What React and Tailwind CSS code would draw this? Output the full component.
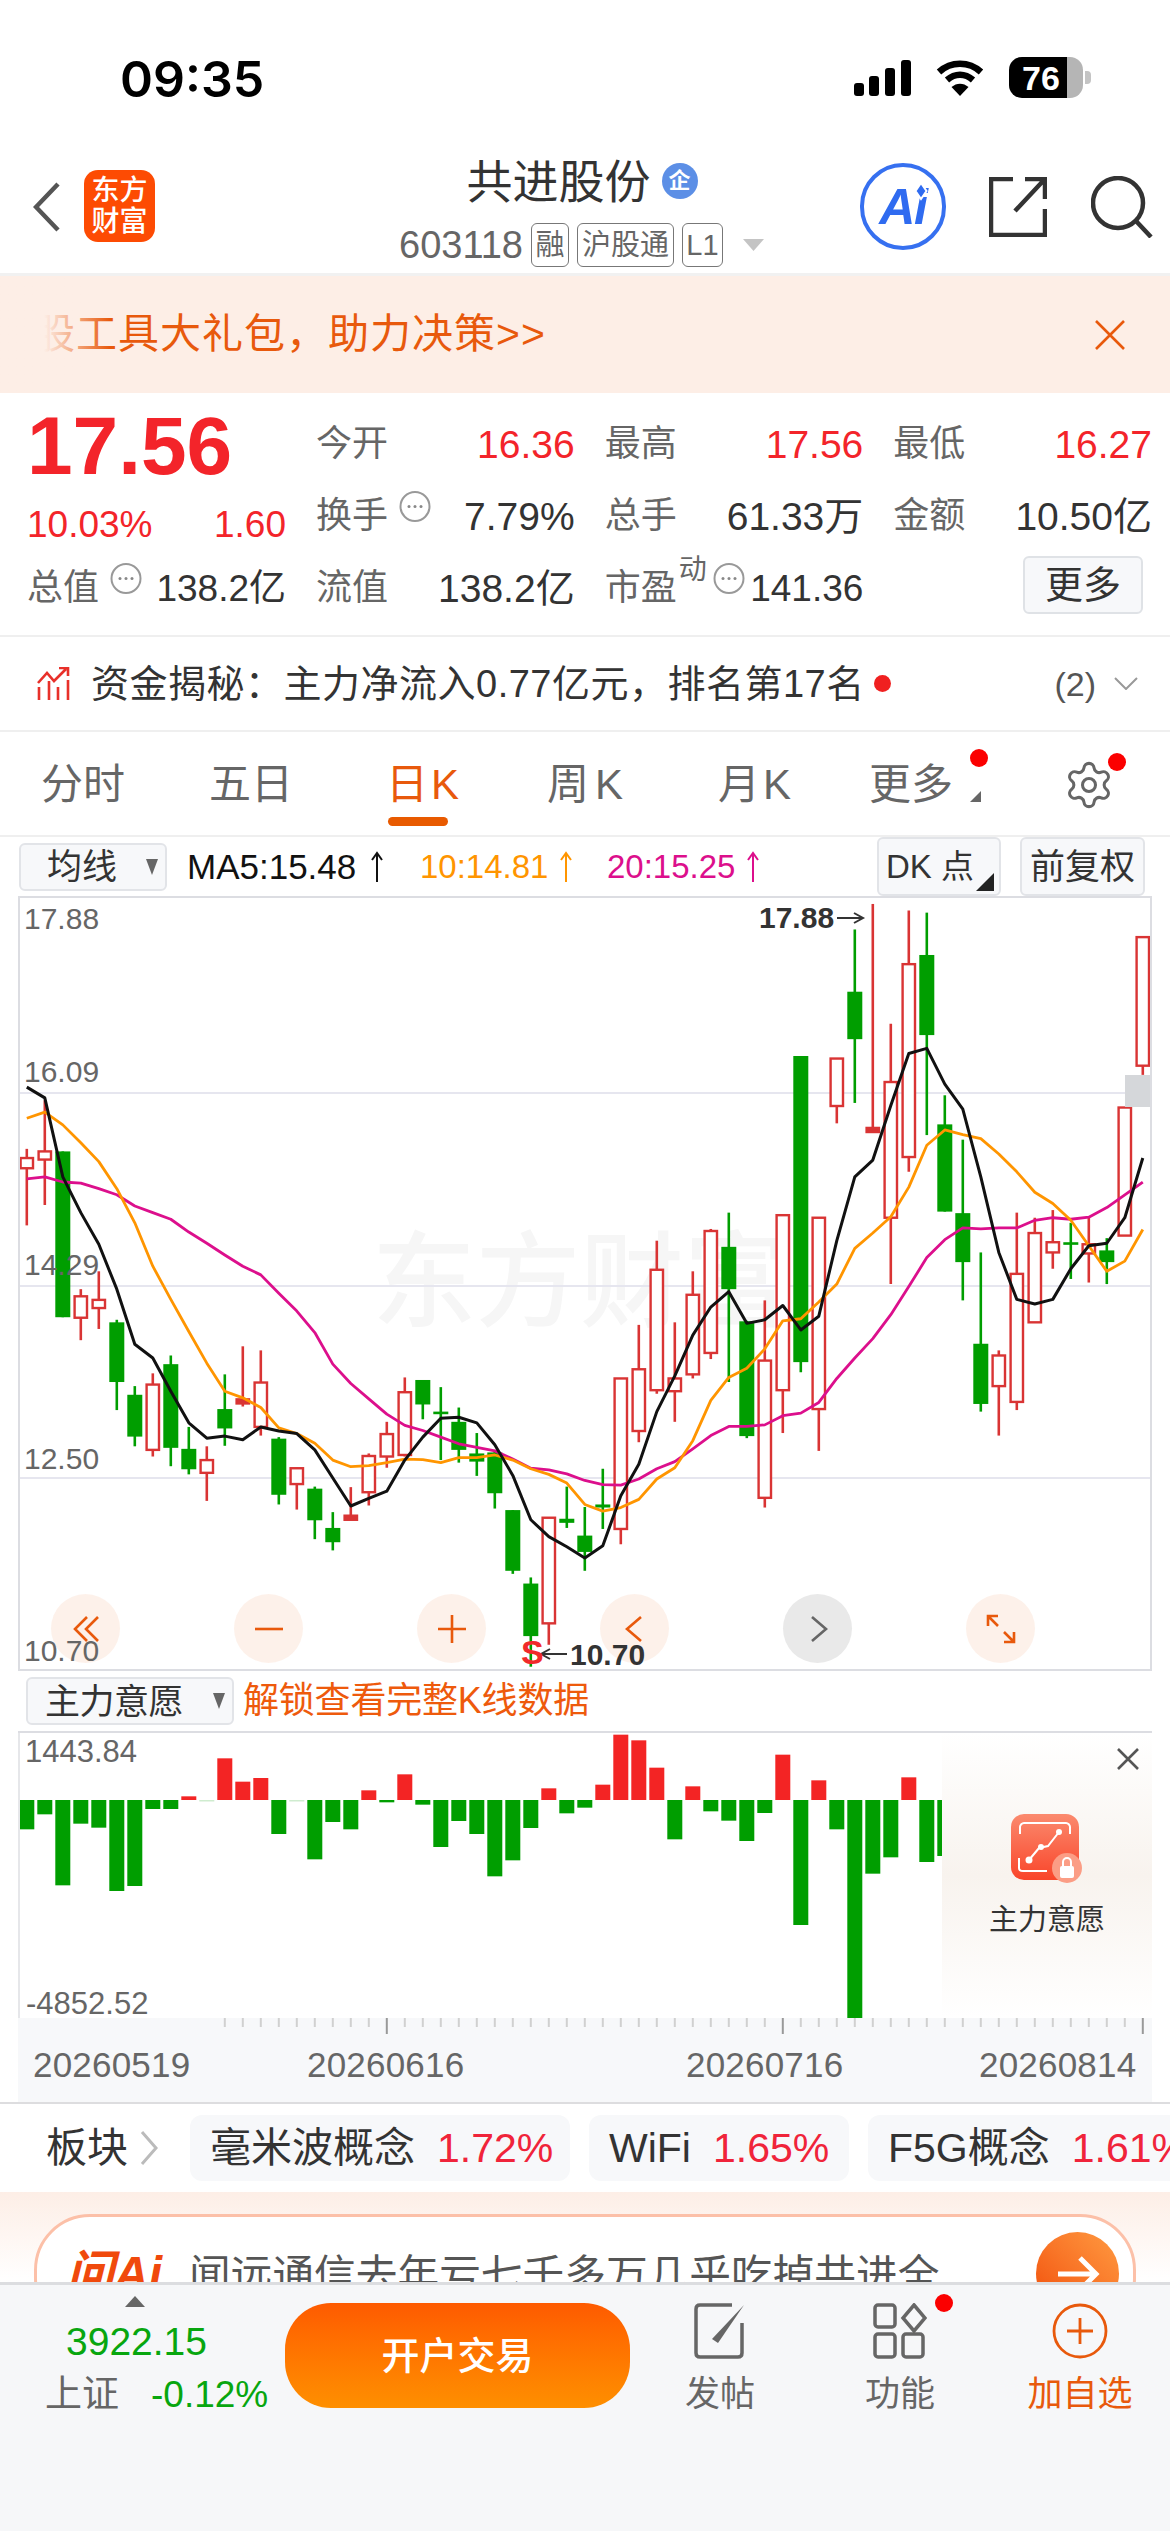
import React from 'react';
import { Settings } from 'lucide-react';

// [type, high, bodyTop, bodyBottom, low] measured off the reference
const CANDLES = [
  ['r',525,543,563,675],['r',430,530,546,635],['g',530,530,855,855],['r',800,814,856,900],['r',765,821,837,878],
  ['g',860,865,982,1037],['g',990,1007,1089,1108],['r',965,987,1115,1128],['g',930,947,1111,1147],['g',1070,1113,1153,1163],
  ['r',1108,1135,1160,1215],['g',967,1035,1073,1107],['r',912,1016,1024,1030],['r',920,983,1070,1087],['g',1090,1093,1203,1222],
  ['r',1150,1151,1182,1232],['g',1187,1191,1253,1290],['g',1237,1268,1296,1312],['r',1188,1244,1252,1252],['r',1122,1127,1198,1224],
  ['r',1060,1084,1128,1150],['r',973,1002,1125,1128],['g',978,978,1026,1055],['g',992,1040,1044,1135],['g',1032,1060,1115,1140],
  ['g',1082,1122,1138,1166],['g',1115,1120,1200,1230],['g',1233,1233,1352,1358],['g',1365,1377,1480,1540],['r',1248,1248,1455,1497],
  ['g',1187,1250,1258,1268],['g',1227,1283,1315,1352],['g',1152,1222,1228,1270],['r',975,975,1270,1300],['r',870,957,1078,1100],
  ['r',705,762,998,1005],['r',865,975,1000,1060],['r',765,811,967,975],['r',682,686,925,937],['g',650,717,800,982],
  ['g',862,863,1088,1092],['r',822,940,1209,1228],['r',655,655,998,1082],['g',343,343,943,963],['r',660,660,1035,1117],
  ['r',348,348,441,475],['g',95,217,310,435],['r',45,484,492,492],['r',280,394,660,790],['r',58,163,541,570],
  ['g',62,145,302,498],['g',420,477,648,648],['g',507,651,747,822],['g',728,907,1025,1040],['r',920,930,990,1087],
  ['r',650,770,1021,1037],['r',660,690,865,865],['r',645,708,728,760],['g',670,708,712,780],['r',660,712,730,787],
  ['g',700,724,747,790],['r',444,444,695,695],['r',110,110,362,380],
];
const MA5 = [404,425,580,650,712,800,908,935,1000,1062,1092,1088,1095,1070,1078,1083,1115,1170,1225,1210,1196,1135,1090,1053,1051,1062,1105,1165,1252,1285,1305,1327,1303,1205,1143,1040,970,890,835,805,867,860,832,880,853,705,580,547,440,338,328,398,447,580,728,820,829,820,760,715,710,660,543];
const MA10 = [465,453,478,513,550,603,670,755,820,883,945,1000,1013,1032,1072,1083,1102,1135,1148,1146,1140,1133,1134,1140,1130,1130,1125,1135,1152,1163,1180,1222,1235,1228,1212,1172,1150,1097,1018,973,955,917,862,858,825,790,720,690,658,600,518,488,497,505,535,570,610,632,665,715,765,745,683];
const MA20 = [584,580,590,592,603,615,637,650,663,688,710,733,755,772,808,843,885,947,985,1015,1045,1067,1077,1090,1103,1110,1117,1133,1151,1154,1162,1175,1183,1184,1172,1152,1138,1113,1087,1069,1069,1066,1048,1043,1022,975,935,897,850,795,738,703,680,682,680,680,665,660,663,659,640,615,590];
// bar end position, zero line at 417
const BARS = [505,460,673,488,500,690,675,444,444,406,420,292,362,351,519,420,595,483,505,388,424,340,431,558,480,519,646,598,501,382,457,440,371,221,238,320,535,376,451,479,540,456,281,792,358,505,1076,638,589,349,603,585];
const FAINT = [10, 15];

const cx = (i) => 26.8 + 18 * i;
const cy = (z) => 880 + z / 1.96;
const by = (z) => 1660 + z / 3;
const linePoints = (arr) => arr.map((v, i) => `${cx(i)},${cy(v)}`).join(' ');

const Candle = ({ d, i }) => {
  const [type, high, top, bottom, low] = d;
  const x = cx(i);
  const color = type === 'r' ? '#d93434' : '#009e00';
  return (
    <g>
      <line x1={x} x2={x} y1={cy(high)} y2={cy(low)} stroke={color} strokeWidth="2.6" />
      {type === 'r' ? (
        <rect x={x - 6.2} y={cy(top)} width="12.4" height={Math.max(cy(bottom) - cy(top), 1)} fill={bottom - top < 10 ? color : '#fff'} stroke={color} strokeWidth="2.4" />
      ) : (
        <rect x={x - 7.5} y={cy(top)} width="15" height={Math.max(cy(bottom) - cy(top), 2.6)} fill={color} />
      )}
    </g>
  );
};

const KChartSvg = () => (
  <svg className="absolute inset-0" width="1134" height="775" viewBox="18 897 1134 775">
    {[1092, 1285, 1477].map((y) => (
      <line key={y} x1="18" x2="1152" y1={y} y2={y} stroke="#e6e6ef" strokeWidth="2" />
    ))}
    {CANDLES.map((d, i) => <Candle key={i} d={d} i={i} />)}
    <polyline points={linePoints(MA20)} fill="none" stroke="#dc0f8c" strokeWidth="2.8" strokeLinejoin="round" />
    <polyline points={linePoints(MA10)} fill="none" stroke="#ff9500" strokeWidth="2.8" strokeLinejoin="round" />
    <polyline points={linePoints(MA5)} fill="none" stroke="#111" strokeWidth="3" strokeLinejoin="round" />
    <rect x="1125" y="1074" width="27" height="32" fill="#d5d7da" />
    <path d="M837 917h26m-9-5 9 5-9 5" fill="none" stroke="#333" strokeWidth="2" />
    <path d="M567 1653h-26m9-5-9 5 9 5" fill="none" stroke="#333" strokeWidth="2" />
  </svg>
);

const RoundBtn = ({ gray, children }) => (
  <div className={`w-[69px] h-[69px] rounded-full flex items-center justify-center ${gray ? 'bg-[#e9e9e9]' : 'bg-[#fdf0e8]/90'}`}>
    <svg width="36" height="36" viewBox="0 0 36 36" fill="none" stroke={gray ? '#666' : '#e8590c'} strokeWidth="2.6">
      {children}
    </svg>
  </div>
);

const Dots = ({ className = '' }) => (
  <svg className={className} width="32" height="33" viewBox="0 0 32 33">
    <circle cx="16" cy="16.5" r="14.5" fill="none" stroke="#999" strokeWidth="2" />
    <circle cx="10" cy="16.5" r="1.5" fill="#888" />
    <circle cx="16" cy="16.5" r="1.5" fill="#888" />
    <circle cx="22" cy="16.5" r="1.5" fill="#888" />
  </svg>
);

const Tag = ({ w, children }) => (
  <span className={`h-[44px] ${w} flex items-center justify-center border-[1.5px] border-[#777] rounded-md text-[#666] text-[29px] leading-none`}>
    {children}
  </span>
);

const UpArrow = ({ color }) => (
  <svg width="16" height="32" viewBox="0 0 16 32" fill="none" stroke={color} strokeWidth="2">
    <path d="M8 31V2M3 9l5-7 5 7" />
  </svg>
);

const Stat = ({ label, value, red, info }) => (
  <div className="flex items-center justify-between h-[72px]">
    <span className="relative text-[36px] text-[#666] leading-none">
      {label}
      {info && <Dots className="absolute left-[83px] -top-[8px]" />}
    </span>
    <span className={`text-[39px] leading-none ${red ? 'text-[#f3242a]' : 'text-[#333]'}`}>{value}</span>
  </div>
);

const Tab = ({ w, active, children }) => (
  <div className={`${w} relative text-[42px] leading-none ${active ? 'text-[#e8590c]' : 'text-[#666]'}`}>
    {children}
    {active && <div className="absolute left-[2px] top-[53px] w-[60px] h-[9px] rounded-full bg-[#e85a00]" />}
  </div>
);

const ToolButton = ({ label, active, children }) => (
  <div className="w-[180px] flex flex-col items-center">
    <div className="h-[56px] flex items-center justify-center">{children}</div>
    <span className={`mt-[17px] text-[35px] leading-none ${active ? 'text-[#e8590c]' : 'text-[#666]'}`}>{label}</span>
  </div>
);

const Chip = ({ name, pct, w }) => (
  <div className={`${w} shrink-0 h-[66px] bg-[#f7f8fa] rounded-xl flex items-center pl-[20px] gap-[22px] text-[41px] leading-none`}>
    <span className="text-[#333] whitespace-nowrap">{name}</span>
    <span className="text-[#f0243a]">{pct}</span>
  </div>
);

export default function App() {
  return (
    <div className="w-[1170px] h-[2532px] overflow-hidden bg-white font-['Liberation_Sans','Noto_Sans_CJK_SC',sans-serif]">
      {/* status bar */}
      <div className="h-[135px] flex items-start justify-between pt-[57px] pl-[120px] pr-[79px]">
        <span className="font-['Inter',sans-serif] font-semibold text-[50px] leading-[44px] text-black">09:35</span>
        <div className="flex items-center gap-[25px]">
          <svg width="57" height="36" viewBox="0 0 57 36" fill="#000">
            <rect x="0" y="23" width="10" height="13" rx="3" />
            <rect x="15" y="16" width="10" height="20" rx="3" />
            <rect x="31" y="8" width="10" height="28" rx="3" />
            <rect x="47" y="0" width="10" height="36" rx="3" />
          </svg>
          <svg width="48" height="36" viewBox="0 0 48 36" fill="none" stroke="#000" strokeWidth="6.5">
            <path d="M3 12C15 1 33 1 45 12" />
            <path d="M11 20c8-7 18-7 26 0" />
            <path d="M24 36 15.5 27c5-4.500 12-4.500 17 0z" fill="#000" stroke="none" />
          </svg>
          <div className="relative w-[82px] h-[41px] flex">
            <div className="w-[58px] h-[41px] bg-black rounded-l-[13px] flex items-center justify-center text-white font-bold text-[34px] leading-none pl-[6px]">76</div>
            <div className="w-[16px] h-[41px] bg-[#b5b5b5] rounded-r-[13px]" />
            <div className="w-[6px] h-[13px] mt-[14px] ml-[2px] rounded-r bg-[#c4c4c4]" />
          </div>
        </div>
      </div>

      {/* nav bar */}
      <div className="h-[138px] flex items-start pl-[33px] relative">
        <svg className="mt-[47px]" width="27" height="50" viewBox="0 0 27 50" fill="none" stroke="#555" strokeWidth="4.500">
          <path d="M25 2 3 25l22 23" />
        </svg>
        <div className="ml-[24px] mt-[35px] w-[71px] h-[72px] rounded-[14px] bg-[#fd4b03] flex flex-col items-center justify-center text-white text-[28px] leading-[31px] font-medium">
          <span>东方</span>
          <span>财富</span>
        </div>
        <div className="ml-[244px] w-[366px] flex flex-col items-center">
          <div className="h-[88px] w-full flex items-start justify-center pt-[22px]">
            <span className="text-[46px] leading-[50px] text-[#333]">共进股份</span>
            <span className="ml-[11px] mt-[6px] w-[36px] h-[36px] rounded-full bg-[#5c8fe6] flex items-center justify-center text-white text-[22px] font-bold leading-none">企</span>
          </div>
          <div className="w-full flex items-center gap-[8px]">
            <span className="text-[38px] leading-none text-[#666]">603118</span>
            <Tag w="w-[38px]">融</Tag>
            <Tag w="w-[97px]">沪股通</Tag>
            <Tag w="w-[41px]">L1</Tag>
            <svg className="ml-[12px]" width="21" height="12" viewBox="0 0 21 12"><path d="M0 0h21L10.500 12z" fill="#c4c4c4" /></svg>
          </div>
        </div>
        <div className="ml-[95px] mt-[28px] relative w-[86px] h-[87px] rounded-full border-[4px] border-[#3670f0] flex items-center justify-center">
          <span className="font-bold italic text-[#2f6bf0] text-[50px] leading-none tracking-tight">Ai</span>
          <svg className="absolute left-[47px] top-[14px]" width="20" height="20" viewBox="0 0 20 20"><path d="M10 2l5.500 8-5.500 8-5.500-8z" fill="#2f6bf0" stroke="#fff" strokeWidth="2" /></svg>
        </div>
        <svg className="ml-[43px] mt-[42px]" width="58" height="60" viewBox="0 0 58 60" fill="none" stroke="#333" strokeWidth="4.500">
          <path d="M24 2H2v56h54V32" />
          <path d="M26 34 55 3M36 2h20v20" />
        </svg>
        <svg className="ml-[44px] mt-[41px]" width="62" height="62" viewBox="0 0 62 62" fill="none" stroke="#333" strokeWidth="4.500">
          <circle cx="27" cy="27" r="25" />
          <path d="M45 45l15 16" />
        </svg>
      </div>

      {/* banner */}
      <div className="border-t-[3px] border-[#f1f1f1] h-[120px] bg-[#fdeee6] relative flex items-center justify-between pl-[34px] pr-[45px]">
        <span className="text-[41px] leading-none tracking-[1px] text-[#e8590c] whitespace-nowrap">股工具大礼包，助力决策&gt;&gt;</span>
        <svg width="30" height="30" viewBox="0 0 30 30" fill="none" stroke="#e8590c" strokeWidth="2.600"><path d="M1 1l28 28M29 1 1 29" /></svg>
        <div className="absolute left-0 top-0 w-[110px] h-full bg-gradient-to-r from-[#fdeee6] from-40% to-[#fdeee6]/0" />
      </div>

      {/* quote */}
      <div className="h-[244px] border-b-2 border-[#efefef] pt-[15px] pl-[27px] pr-[18px] flex">
        <div className="w-[259px] shrink-0">
          <div className="h-[72px] pt-[4px] flex items-center text-[82px] leading-none font-bold text-[#f3242a]">17.56</div>
          <div className="h-[72px] pt-[16px] flex items-center justify-between text-[#f3242a] text-[37px] leading-none">
            <span>10.03%</span>
            <span>1.60</span>
          </div>
          <div className="h-[72px] flex items-center justify-between">
            <span className="relative text-[36px] text-[#666] leading-none">
              总值
              <Dots className="absolute left-[83px] -top-[8px]" />
            </span>
            <span className="text-[37px] leading-none text-[#333]">138.2亿</span>
          </div>
        </div>
        <div className="ml-[30px] flex-1 grid grid-cols-3 gap-x-[30px] content-start">
          <Stat label="今开" value="16.36" red />
          <Stat label="最高" value="17.56" red />
          <Stat label="最低" value="16.27" red />
          <Stat label="换手" value="7.79%" info />
          <Stat label="总手" value="61.33万" />
          <Stat label="金额" value="10.50亿" />
          <Stat label="流值" value="138.2亿" />
          <div className="flex items-center justify-between h-[72px]">
            <span className="relative text-[36px] text-[#666] leading-none">
              市盈
              <span className="absolute left-[74px] -top-[14px] text-[28px] whitespace-nowrap">动</span>
              <Dots className="absolute left-[108px] -top-[8px]" />
            </span>
            <span className="text-[37px] leading-none text-[#333]">141.36</span>
          </div>
          <div className="flex items-start justify-end h-[72px] pr-[9px] pt-[4px]">
            <div className="w-[120px] h-[58px] bg-[#f7f8fa] border-2 border-[#dfe2e6] rounded-md flex items-center justify-center text-[38px] leading-none text-[#333]">更多</div>
          </div>
        </div>
      </div>

      {/* capital flow */}
      <div className="h-[95px] border-b-2 border-[#efefef] flex items-center pl-[36px] pr-[32px]">
        <svg width="35" height="34" viewBox="0 0 35 34" fill="none" stroke="#e8302a" strokeWidth="2.600">
          <path d="M2 16 11 6l7 8L30 2M23 1h9v8" />
          <path d="M3 33V20M13 33V14M22 33V20M32 33V13" />
        </svg>
        <span className="ml-[20px] text-[38px] leading-none text-[#333] whitespace-nowrap tracking-[0.5px]">资金揭秘：主力净流入0.77亿元，排名第17名</span>
        <span className="ml-[9px] w-[17px] h-[17px] rounded-full bg-[#f02020]" />
        <span className="ml-auto text-[34px] text-[#555] leading-none">(2)</span>
        <svg className="ml-[18px]" width="24" height="13" viewBox="0 0 24 13" fill="none" stroke="#999" strokeWidth="2"><path d="M1 1l11 11L23 1" /></svg>
      </div>

      {/* period tabs */}
      <div className="h-[105px] border-b-2 border-[#efefef] flex items-center pl-[41px] pt-[3px] relative">
        <Tab w="w-[168px]">分时</Tab>
        <Tab w="w-[177px]">五日</Tab>
        <Tab w="w-[161px]" active>日<span className="ml-[3px]">K</span></Tab>
        <Tab w="w-[171px]">周<span className="ml-[6px]">K</span></Tab>
        <Tab w="w-[151px]">月<span className="ml-[3px]">K</span></Tab>
        <div className="relative w-[194px] text-[42px] leading-none text-[#666]">
          更多
          <span className="absolute left-[101px] -top-[15px] w-[18px] h-[18px] rounded-full bg-[#fb0000]" />
          <svg className="absolute left-[101px] top-[27px]" width="11" height="11" viewBox="0 0 11 11"><path d="M11 0v11H0z" fill="#666" /></svg>
        </div>
        <div className="relative">
          <Settings size={52} strokeWidth={1.4} color="#666" />
          <span className="absolute left-[45px] -top-[6px] w-[18px] h-[18px] rounded-full bg-[#fb0000]" />
        </div>
      </div>

      {/* indicator row */}
      <div className="h-[59px] flex items-center pl-[19px] pr-[25px]">
        <div className="w-[148px] h-[48px] bg-[#f7f8fa] border-2 border-[#e2e4e8] rounded-md flex items-center text-[35px] leading-none text-[#333] pl-[26px]">
          均线
          <svg className="ml-[29px]" width="12" height="16" viewBox="0 0 12 16"><path d="M0 0h12L6 16z" fill="#666" /></svg>
        </div>
        <div className="ml-[20px] w-[233px] flex items-center text-[35px] leading-none text-[#111]">
          <span>MA5:15.48</span>
          <span className="ml-[13px]"><UpArrow color="#111" /></span>
        </div>
        <div className="w-[187px] flex items-center text-[33px] leading-none text-[#ff9500]">
          <span>10:14.81</span>
          <span className="ml-[10px]"><UpArrow color="#ff9500" /></span>
        </div>
        <div className="flex items-center text-[33px] leading-none text-[#dc0f8c]">
          <span>20:15.25</span>
          <span className="ml-[10px]"><UpArrow color="#dc0f8c" /></span>
        </div>
        <div className="ml-auto relative w-[124px] h-[59px] bg-[#f7f8fa] border-2 border-[#e2e4e8] rounded-md flex items-center pl-[7px] text-[33px] leading-none text-[#333]">
          DK 点
          <svg className="absolute right-[5px] bottom-[3px]" width="18" height="18" viewBox="0 0 18 18"><path d="M18 0v18H0z" fill="#222" /></svg>
        </div>
        <div className="ml-[19px] w-[125px] h-[59px] bg-[#f7f8fa] border-2 border-[#e2e4e8] rounded-md flex items-center justify-center text-[35px] leading-none text-[#333]">前复权</div>
      </div>

      {/* k line chart */}
      <div className="mx-[18px] w-[1134px] h-[775px] relative border-t-2 border-b-2 border-[#dcdde2] overflow-hidden">
        <div className="absolute left-[354px] top-[333px] text-[104px] leading-none text-[#f6f6f6] whitespace-nowrap font-medium">东方财富</div>
        <KChartSvg />
        <div className="absolute inset-0 border-x-2 border-[#dcdde2]" />
        <div className="absolute left-[6px] top-[5px] text-[30px] leading-[32px] text-[#666]">17.88</div>
        <div className="absolute left-[6px] top-[158px] text-[30px] leading-[32px] text-[#666]">16.09</div>
        <div className="absolute left-[6px] top-[351px] text-[30px] leading-[32px] text-[#666]">14.29</div>
        <div className="absolute left-[6px] top-[545px] text-[30px] leading-[32px] text-[#666]">12.50</div>
        <div className="absolute left-[33px] right-[117px] top-[696px] flex justify-between">
          <RoundBtn><path d="M19 6 7 18l12 12M30 6 18 18l12 12" /></RoundBtn>
          <RoundBtn><path d="M4 18h28" /></RoundBtn>
          <RoundBtn><path d="M4 18h28M18 4v28" /></RoundBtn>
          <RoundBtn><path d="M24 6 10 18l14 12" /></RoundBtn>
          <RoundBtn gray><path d="M12 6l14 12-14 12" /></RoundBtn>
          <RoundBtn><path d="M5 15V5h10M5 5l10 10M31 21v10H21M31 31 21 21" /></RoundBtn>
        </div>
        <div className="absolute left-[6px] top-[737px] text-[30px] leading-[32px] text-[#666]">10.70</div>
        <div className="absolute left-[741px] top-[4px] text-[30px] leading-[32px] font-semibold text-[#333]">17.88</div>
        <div className="absolute left-[503px] top-[736px] text-[34px] leading-[36px] font-bold text-[#f02a2a]">S</div>
        <div className="absolute left-[552px] top-[741px] text-[30px] leading-[32px] font-semibold text-[#333]">10.70</div>
      </div>

      {/* sub indicator row */}
      <div className="h-[60px] flex items-center pl-[26px]">
        <div className="w-[208px] h-[48px] bg-[#f7f8fa] border-2 border-[#e2e4e8] rounded-md flex items-center text-[35px] leading-none text-[#333] pl-[17px] tracking-[-0.500px]">
          主力意愿
          <svg className="ml-[30px]" width="12" height="16" viewBox="0 0 12 16"><path d="M0 0h12L6 16z" fill="#666" /></svg>
        </div>
        <span className="ml-[9px] text-[36px] tracking-[-0.200px] leading-none text-[#ee5a0c] whitespace-nowrap">解锁查看完整K线数据</span>
      </div>

      {/* bars */}
      <div className="mx-[18px] w-[1134px] h-[287px] relative border-t-2 border-[#dcdde2] overflow-hidden">
        <svg className="absolute inset-0" width="1134" height="287" viewBox="18 1732 1134 287">
          {BARS.map((end, i) => {
            const up = end < 417;
            const top = by(Math.min(end, 417));
            const h = Math.abs(by(end) - by(417));
            const faint = FAINT.includes(i);
            return <rect key={i} x={cx(i) - 7.5} y={top} width="15" height={Math.max(h, 1.5)} fill={faint ? '#cfeccf' : up ? '#f32424' : '#009e00'} />;
          })}
        </svg>
        <div className="absolute inset-0 border-x-2 border-[#e6e7ea]" />
        <div className="absolute left-[7px] top-[2px] text-[31px] leading-[34px] text-[#666]">1443.84</div>
        <div className="absolute left-[8px] top-[254px] text-[31px] leading-[34px] text-[#666]">-4852.52</div>
        <div className="absolute right-0 top-0 w-[210px] h-full bg-gradient-to-b from-white via-[#f8f3ee] to-white flex flex-col items-center pt-[81px]">
          <svg width="72" height="70" viewBox="0 0 72 70">
            <defs>
              <linearGradient id="lockIcon" x1="0" y1="0" x2="0" y2="1">
                <stop offset="0" stopColor="#fb8a6e" />
                <stop offset="1" stopColor="#f9452a" />
              </linearGradient>
            </defs>
            <rect x="0" y="0" width="68" height="66" rx="13" fill="url(#lockIcon)" />
            <path d="M9 20v-7c0-2 2-4 4-4h42c2 0 4 2 4 4v7M8 44v10c0 2 2 3 4 3h24" fill="none" stroke="#fff" strokeWidth="2" />
            <path d="M18 46l10-12 9-2 11-14" fill="none" stroke="#fff" strokeWidth="2" />
            <circle cx="18" cy="46" r="3.500" fill="#fff" />
            <circle cx="30" cy="33" r="3" fill="#fff" />
            <circle cx="48" cy="18" r="3" fill="#fff" />
            <circle cx="56" cy="54" r="15" fill="#fb9d85" />
            <rect x="49" y="52" width="14" height="12" rx="2" fill="#fff" />
            <path d="M52 52v-4a4 4 0 0 1 8 0v4" fill="none" stroke="#fff" strokeWidth="2" />
          </svg>
          <span className="mt-[22px] text-[29px] leading-none text-[#333]">主力意愿</span>
          <svg className="absolute right-[13px] top-[15px]" width="22" height="22" viewBox="0 0 22 22" fill="none" stroke="#555" strokeWidth="2.600"><path d="M1 1l20 20M21 1 1 21" /></svg>
        </div>
      </div>

      {/* time axis */}
      <div className="mx-[18px] w-[1134px] h-[84px] bg-[#f7f8fa] relative">
        <svg className="absolute left-0 top-0" width="1134" height="18" viewBox="18 2019 1134 18">
          {Array.from({ length: 52 }).map((_, i) => {
            const n = i + 11;
            const long = n === 20 || n === 42 || n === 62;
            return <line key={n} x1={cx(n)} x2={cx(n)} y1="2019" y2={long ? 2035 : 2028} stroke={long ? '#999' : '#d0d0d0'} strokeWidth="2" />;
          })}
        </svg>
        <div className="flex items-center h-full pt-[8px] pl-[15px] text-[35px] leading-none text-[#666] tracking-[0.2px]">
          <span className="w-[159px]">20260519</span>
          <span className="ml-[115px] w-[159px]">20260616</span>
          <span className="ml-[220px] w-[159px]">20260716</span>
          <span className="ml-[134px] w-[159px]">20260814</span>
        </div>
      </div>

      {/* sectors */}
      <div className="h-[90px] border-t-2 border-[#dddddf] flex items-center pl-[46px] overflow-hidden">
        <span className="text-[41px] leading-none text-[#333] shrink-0">板块</span>
        <svg className="ml-[12px] shrink-0" width="18" height="34" viewBox="0 0 18 34" fill="none" stroke="#bbb" strokeWidth="3"><path d="M2 1l14 16L2 33" /></svg>
        <div className="ml-[32px] flex gap-[19px]">
          <Chip name="毫米波概念" pct="1.72%" w="w-[380px]" />
          <Chip name="WiFi" pct="1.65%" w="w-[260px]" />
          <Chip name="F5G概念" pct="1.61%" w="w-[320px]" />
        </div>
      </div>

      {/* promo, cut off by the bottom bar */}
      <div className="h-[90px] bg-gradient-to-b from-[#fdeee6] to-white pt-[22px] px-[34px] overflow-hidden">
        <div className="h-[120px] rounded-[56px] border-[3px] border-[#fcc0a8] bg-white flex items-start pl-[29px] pt-[33px] relative">
          <span className="font-bold italic text-[48px] leading-none text-[#f0490c] whitespace-nowrap">问Ai</span>
          <span className="ml-[27px] mt-[5px] text-[41.700px] leading-none text-[#555] whitespace-nowrap">闻远通信去年亏七千多万几乎吃掉共进全</span>
          <div className="absolute right-[14px] top-[15px] w-[83px] h-[83px] rounded-full bg-gradient-to-tr from-[#f04a00] to-[#ff9a40] flex items-center justify-center">
            <svg width="44" height="40" viewBox="0 0 44 40" fill="none" stroke="#fff" strokeWidth="5"><path d="M2 20h38M24 4l16 16-16 16" /></svg>
          </div>
        </div>
      </div>

      {/* bottom bar */}
      <div className="h-[249px] border-t-[3px] border-[#dcdde0] bg-[#f6f7f9] flex items-start">
        <div className="w-[285px] pl-[45px] pt-[11px] shrink-0">
          <svg className="ml-[80px]" width="20" height="11" viewBox="0 0 20 11"><path d="M10 0l10 11H0z" fill="#666" /></svg>
          <div className="ml-[21px] mt-[15px] text-[39px] leading-none text-[#08a60f]">3922.15</div>
          <div className="mt-[15px] flex items-center gap-[32px] leading-none">
            <span className="text-[37px] text-[#666]">上证</span>
            <span className="text-[37px] text-[#08a60f]">-0.12%</span>
          </div>
        </div>
        <div className="mt-[18px] w-[345px] h-[105px] shrink-0 rounded-[46px] bg-gradient-to-b from-[#fe5a00] to-[#fe8f00] flex items-center justify-center text-[38px] leading-none font-medium text-white">开户交易</div>
        <div className="flex pt-[18px]">
          <ToolButton label="发帖">
            <svg width="52" height="56" viewBox="0 0 52 56" fill="none" stroke="#666" strokeWidth="3.500">
              <path d="M38 2H6Q2 2 2 6v44q0 4 4 4h38q4 0 4-4V20" />
              <path d="M18 36 50 2 24 40z" fill="#666" stroke="none" />
            </svg>
          </ToolButton>
          <ToolButton label="功能">
            <div className="relative">
              <svg width="54" height="56" viewBox="0 0 54 56" fill="none" stroke="#666" strokeWidth="3.500">
                <rect x="2" y="2" width="20" height="22" rx="3" />
                <path d="M41 2l11 13-11 13-11-13z" />
                <rect x="2" y="31" width="20" height="23" rx="3" />
                <rect x="30" y="31" width="20" height="23" rx="3" />
              </svg>
              <span className="absolute left-[62px] -top-[9px] w-[18px] h-[18px] rounded-full bg-[#fb0000]" />
            </div>
          </ToolButton>
          <ToolButton label="加自选" active>
            <svg width="56" height="56" viewBox="0 0 56 56" fill="none" stroke="#e8590c" strokeWidth="2.800">
              <circle cx="28" cy="28" r="26" />
              <path d="M15 28h26M28 15v26" />
            </svg>
          </ToolButton>
        </div>
      </div>
    </div>
  );
}
